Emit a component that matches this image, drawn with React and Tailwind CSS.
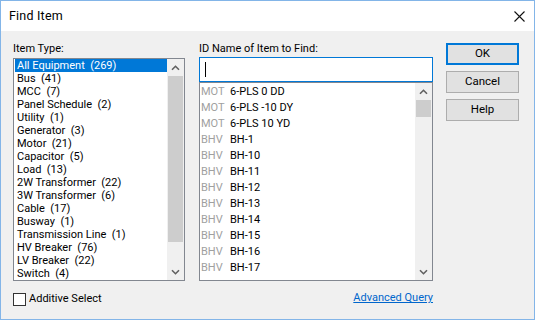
import React from 'react';

const itemTypes = [
    'All Equipment  (269)', 'Bus  (41)', 'MCC  (7)', 'Panel Schedule  (2)', 'Utility  (1)',
    'Generator  (3)', 'Motor  (21)', 'Capacitor  (5)', 'Load  (13)', '2W Transformer  (22)',
    '3W Transformer  (6)', 'Cable  (17)', 'Busway  (1)', 'Transmission Line  (1)',
    'HV Breaker  (76)', 'LV Breaker  (22)', 'Switch  (4)',
];

const items = [
    ['MOT', '6-PLS 0 DD'], ['MOT', '6-PLS -10 DY'], ['MOT', '6-PLS 10 YD'],
    ['BHV', 'BH-1'], ['BHV', 'BH-10'], ['BHV', 'BH-11'], ['BHV', 'BH-12'], ['BHV', 'BH-13'],
    ['BHV', 'BH-14'], ['BHV', 'BH-15'], ['BHV', 'BH-16'], ['BHV', 'BH-17'],
];

function Chevron({ down }) {
    return (
        <svg width="9" height="6" viewBox="0 0 9 6">
            <path d={down ? 'M1 1.2 L4.5 4.7 L8 1.2' : 'M1 4.8 L4.5 1.3 L8 4.8'} fill="none" stroke="#606060" strokeWidth="1.6" />
        </svg>
    );
}

function ScrollBar({ thumb }) {
    return (
        <div className="w-[17px] bg-[#f0f0f0] flex flex-col">
            <div className="h-[17px] flex items-center justify-center"><Chevron /></div>
            <div className={`${thumb} mx-[1px] bg-[#cdcdcd]`}></div>
            <div className="flex-1"></div>
            <div className="h-[17px] flex items-center justify-center"><Chevron down /></div>
        </div>
    );
}

export default function App() {
    return (
        <div className="w-[535px] h-[320px] border border-[#83b5e8] bg-[#f0f0f0] flex flex-col text-black text-[11px] font-['Roboto',sans-serif]">
            {/* Title bar */}
            <div className="h-[30px] bg-white flex items-center justify-between pl-[8px] pr-[9px]">
                <span className="text-[12.5px] tracking-[0.2px]">Find Item</span>
                <svg width="11" height="11" viewBox="0 0 11 11">
                    <path d="M0.5 0.5 L10.5 10.5 M10.5 0.5 L0.5 10.5" stroke="#111" strokeWidth="1.1" />
                </svg>
            </div>

            <div className="flex-1 flex pl-[12px] pt-[11px]">
                {/* Item type column */}
                <div className="w-[172px] flex flex-col">
                    <div className="h-[14px] leading-[14px] mb-[2px]">Item Type:</div>
                    <div className="h-[223px] border border-[#828790] bg-white flex">
                        <div className="flex-1 pl-[1px]">
                            {itemTypes.map((t, i) => (
                                <div key={i} className={`h-[13px] leading-[13px] pl-[2px] whitespace-pre ${i === 0 ? 'bg-[#0078d7] text-white' : ''}`}>{t}</div>
                            ))}
                        </div>
                        <ScrollBar thumb="h-[166px]" />
                    </div>
                    <div className="mt-[11px] flex items-center">
                        <div className="w-[13px] h-[13px] border border-[#333333] bg-white"></div>
                        <span className="ml-[3px] leading-[14px]">Additive Select</span>
                    </div>
                </div>

                {/* ID name column */}
                <div className="w-[234px] ml-[14px] flex flex-col">
                    <div className="h-[14px] leading-[14px] mb-[1px]">ID Name of Item to Find:</div>
                    <div className="h-[25px] border border-[#0078d7] bg-white flex items-center pl-[5px]">
                        <div className="w-[1px] h-[15px] bg-black"></div>
                    </div>
                    <div className="h-[199px] border border-[#828790] bg-white flex">
                        <div className="flex-1 pt-[1px] pl-[1px]">
                            {items.map(([k, n], i) => (
                                <div key={i} className="h-[16px] leading-[16px] flex">
                                    <span className="w-[29px] text-[#a0a0a0]">{k}</span>
                                    <span>{n}</span>
                                </div>
                            ))}
                        </div>
                        <ScrollBar thumb="h-[17px]" />
                    </div>
                    <div className="mt-[10px] text-right leading-[14px]">
                        <span className="text-[#0066cc] underline">Advanced Query</span>
                    </div>
                </div>

                {/* Buttons */}
                <div className="w-[73px] ml-[13px] mt-[1px] flex flex-col gap-[6px]">
                    <button className="h-[22px] border-2 border-[#0078d7] bg-[#e1e1e1] text-[11.5px]">OK</button>
                    <button className="h-[22px] border border-[#adadad] bg-[#e1e1e1] text-[11.5px]">Cancel</button>
                    <button className="h-[22px] border border-[#adadad] bg-[#e1e1e1] text-[11.5px]">Help</button>
                </div>
            </div>
        </div>
    );
}
